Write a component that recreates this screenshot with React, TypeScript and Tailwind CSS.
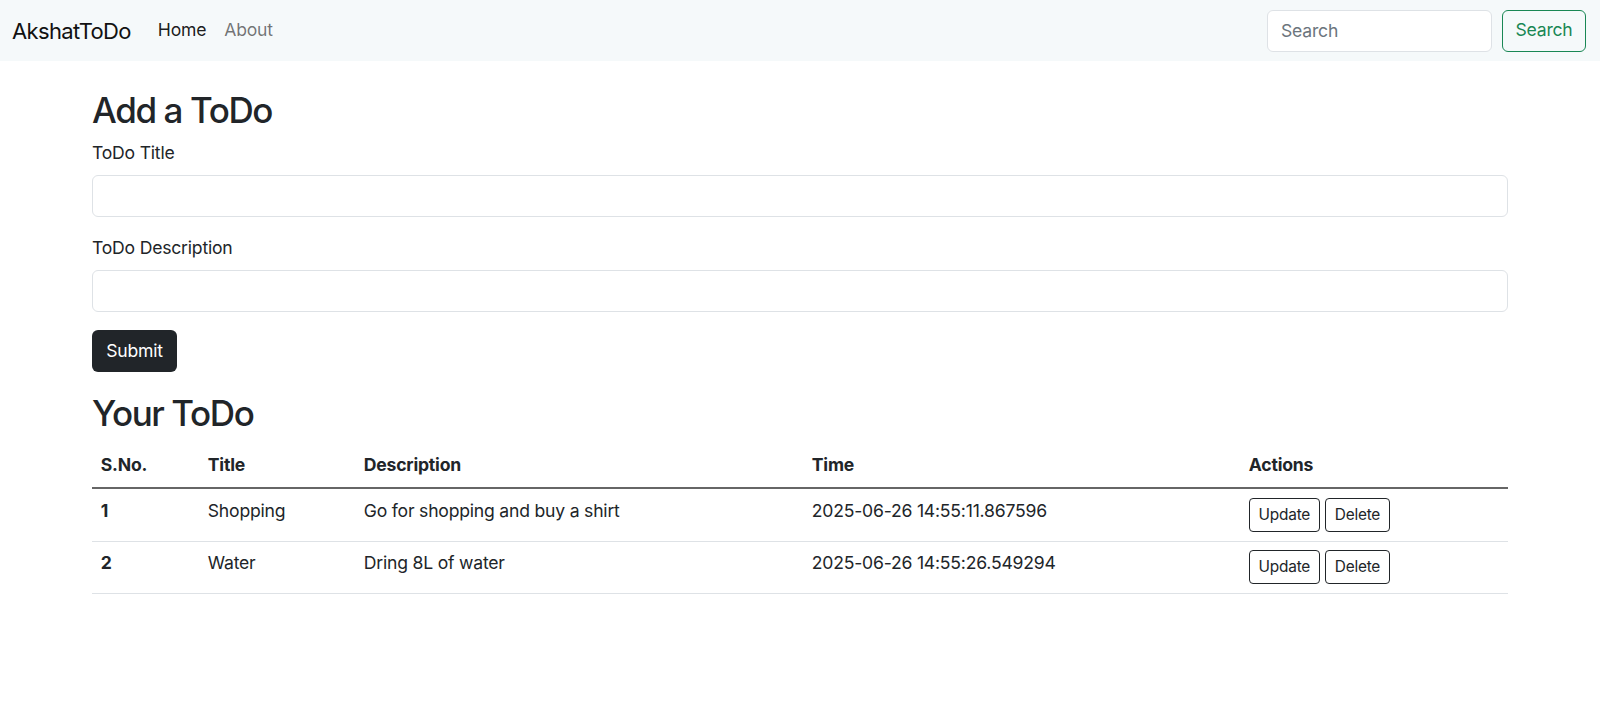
import React from "react";

const todos = [
  { sno: 1, title: "Shopping", desc: "Go for shopping and buy a shirt", time: "2025-06-26 14:55:11.867596" },
  { sno: 2, title: "Water", desc: "Dring 8L of water", time: "2025-06-26 14:55:26.549294" },
];

const App = () => {
  return (
    <div className="min-h-[718px] bg-white text-[#212529] text-[17.6px] leading-[26.4px] tracking-[-0.012em] [font-family:Inter,'Noto_Sans',sans-serif]">
      {/* navbar */}
      <nav className="h-[61px] bg-[#f5f9fa] pl-[12px] pr-[14px] flex items-center justify-between">
        <div className="flex items-center">
          <span className="text-[22px] leading-[30px] mr-[18px] text-[#111] tracking-[-0.03em]">AkshatToDo</span>
          <a className="px-[9px] text-black/90">Home</a>
          <a className="px-[9px] text-black/55">About</a>
        </div>
        <form className="flex items-center gap-[10px]" onSubmit={(e) => e.preventDefault()}>
          <input
            placeholder="Search"
            className="w-[225px] h-[42px] px-[13px] bg-white border border-[#dee2e6] rounded-[6px] placeholder:text-[#6c757d] outline-none"
          />
          <button className="w-[84px] h-[42px] border border-[#198754] text-[#198754] rounded-[6px]">
            Search
          </button>
        </form>
      </nav>

      <div className="mx-[92px]">
        <h2 className="mt-[28px] mb-[9px] text-[35px] leading-[42px] font-medium tracking-[-0.04em]">Add a ToDo</h2>
        <form onSubmit={(e) => e.preventDefault()}>
          <div className="mb-[17.6px]">
            <label className="block mb-[9px]">ToDo Title</label>
            <input className="w-full h-[42px] border border-[#dee2e6] rounded-[6px] px-[13px] outline-none" />
          </div>
          <div className="mb-[17.6px]">
            <label className="block mb-[9px]">ToDo Description</label>
            <input className="w-full h-[42px] border border-[#dee2e6] rounded-[6px] px-[13px] outline-none" />
          </div>
          <button className="h-[42px] px-[13px] w-[85px] bg-[#212529] text-white rounded-[6px]">Submit</button>
        </form>

        <h2 className="mt-[20px] mb-[9px] text-[35px] leading-[42px] font-medium tracking-[-0.04em]">Your ToDo</h2>
        <table className="w-full border-collapse text-left">
          <thead>
            <tr className="border-b-2 border-[#666]">
              <th className="w-[107px] p-[8.8px] font-bold">S.No.</th>
              <th className="w-[156px] p-[8.8px] font-bold">Title</th>
              <th className="w-[448px] p-[8.8px] font-bold">Description</th>
              <th className="w-[437px] p-[8.8px] font-bold">Time</th>
              <th className="p-[8.8px] font-bold">Actions</th>
            </tr>
          </thead>
          <tbody>
            {todos.map((t) => (
              <tr key={t.sno} className="border-b border-[#dee2e6] align-top">
                <th className="p-[8.8px] font-bold">{t.sno}</th>
                <td className="p-[8.8px]">{t.title}</td>
                <td className="p-[8.8px]">{t.desc}</td>
                <td className="p-[8.8px]">{t.time}</td>
                <td className="p-[8.8px]">
                  <div className="flex gap-[5px]">
                    <button className="h-[34px] px-[8.8px] text-[15.4px] border border-[#212529] rounded-[4px]">Update</button>
                    <button className="h-[34px] px-[8.8px] text-[15.4px] border border-[#212529] rounded-[4px]">Delete</button>
                  </div>
                </td>
              </tr>
            ))}
          </tbody>
        </table>
      </div>
    </div>
  );
};

export default App;
